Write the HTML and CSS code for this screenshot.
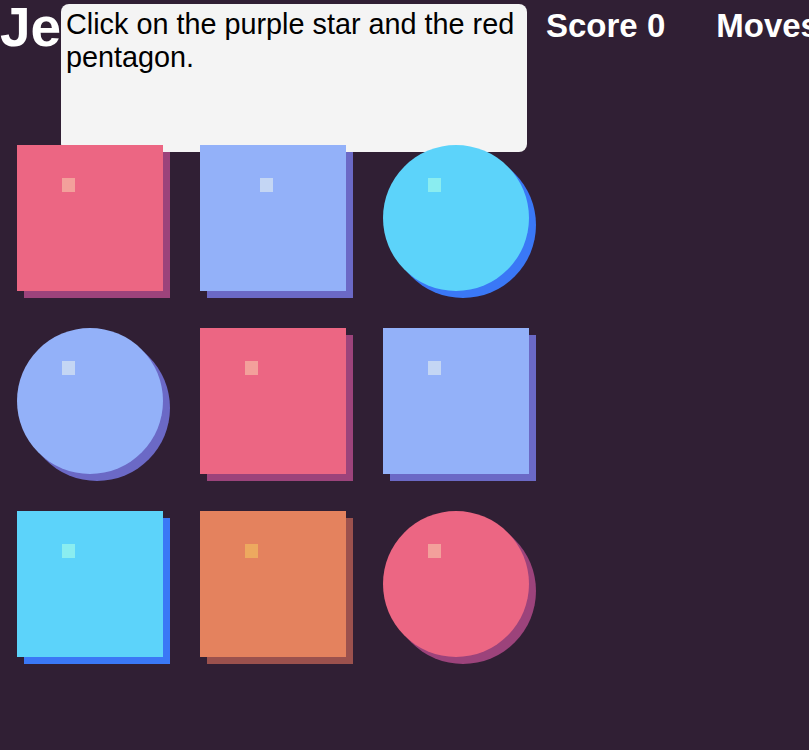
FILE: index.html
```html
<!DOCTYPE html>
<html lang="en">
<head>
    <meta charset="UTF-8">
    <title>Jewels</title>
    <link rel="stylesheet" href="styles.css">
</head>
<body>
    <div class="header">
        <h1 class="title">Jewels</h1>
        <div class="stat">Score 0</div>
        <div class="stat">Moves 0</div>
    </div>

    <div class="hint">Click on the purple star and the red pentagon.</div>

    <div class="board">
        <div class="tile square pink"><span class="shine"></span></div>
        <div class="tile square blue"><span class="shine shine-right"></span></div>
        <div class="tile circle cyan"><span class="shine"></span></div>

        <div class="tile circle blue"><span class="shine"></span></div>
        <div class="tile square pink"><span class="shine"></span></div>
        <div class="tile square blue"><span class="shine"></span></div>

        <div class="tile square cyan"><span class="shine"></span></div>
        <div class="tile square orange"><span class="shine"></span></div>
        <div class="tile circle pink"><span class="shine"></span></div>
    </div>
</body>
</html>
```

FILE: styles.css
```css
/* Page */
body {
    margin: 0;
    background-color: #301f34;
    font-family: "Liberation Sans", Arial, sans-serif;
    color: #fff;
}

/* Header */
.header {
    display: flex;
    align-items: flex-start;
    height: 60px;
    white-space: nowrap;
    overflow: hidden;
}

.title {
    flex: none;
    width: 546px;
    margin: 0;
    font-size: 55px;
    font-weight: bold;
    line-height: 54px;
}

.stat {
    flex: none;
    margin-top: 7px;
    margin-right: 51px;
    font-size: 33px;
    font-weight: bold;
}

/* Hint popup */
.hint {
    position: absolute;
    left: 61px;
    top: 4px;
    width: 456px;
    height: 140px;
    padding: 4px 5px;
    background-color: #f4f4f4;
    border-radius: 8px;
    color: #000;
    font-size: 28.8px;
}

/* Board */
.board {
    display: grid;
    grid-template-columns: repeat(3, 146px);
    grid-auto-rows: 146px;
    gap: 37px;
    padding: 85px 0 40px 17px;
}

.tile {
    position: relative;
    width: 146px;
    height: 146px;
}

.circle {
    border-radius: 50%;
}

.shine {
    position: absolute;
    left: 45px;
    top: 33px;
    width: 13px;
    height: 14px;
}

.shine-right {
    left: 60px;
}

.pink {
    background-color: #ec6683;
    box-shadow: 7px 7px 0 #9c437b;
}
.pink .shine { background-color: #f3a09b; }

.blue {
    background-color: #93b1f9;
    box-shadow: 7px 7px 0 #6b69c6;
}
.blue .shine { background-color: #c4d6f4; }

.cyan {
    background-color: #5cd3fa;
    box-shadow: 7px 7px 0 #3a78f6;
}
.cyan .shine { background-color: #8aedf0; }

.orange {
    background-color: #e4825e;
    box-shadow: 7px 7px 0 #9b514d;
}
.orange .shine { background-color: #eda95f; }
```
